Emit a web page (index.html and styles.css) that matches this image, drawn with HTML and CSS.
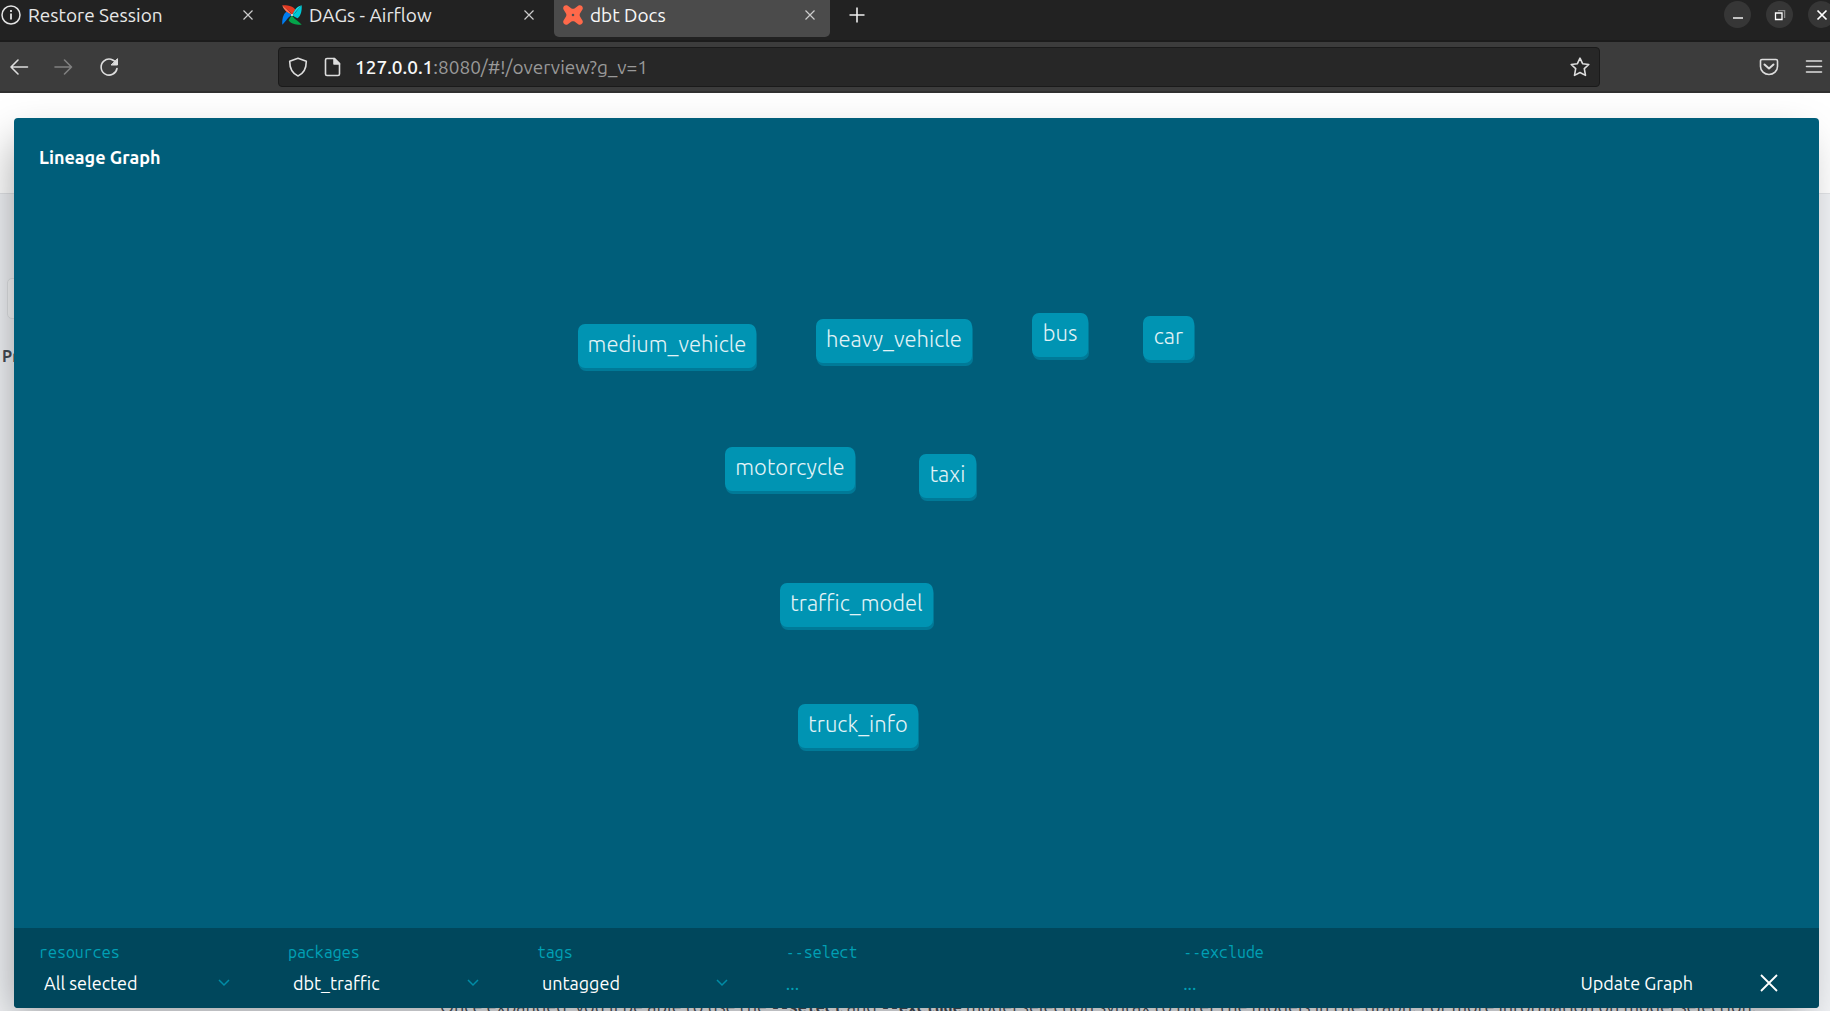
FILE: index.html
```html
<!DOCTYPE html>
<html lang="en">
<head>
<meta charset="utf-8">
<title>dbt Docs</title>
<link rel="stylesheet" href="styles.css">
</head>
<body>
<header class="browser">
  <div class="tabstrip">
    <div class="tab tab-first">
      <svg class="favicon" viewBox="0 0 20 20" fill="none" stroke="#e4e4e4" stroke-width="1.5"><circle cx="10" cy="10" r="9"/><path d="M10 8.500v6M10 5v2" stroke-width="1.800"/></svg>
      <span class="tab-title">Restore Session</span>
      <button class="tab-close" aria-label="Close tab"><svg viewBox="0 0 10 10"><path d="M0.500 0.500l9 9M9.500 0.500l-9 9"/></svg></button>
    </div>
    <div class="tab">
      <svg class="favicon" viewBox="0 0 20 20"><path d="M10 10C8.500 6 4 4.500 .3 .3 5 0 11 .8 13.300 4.500 12.500 6.500 11 8.500 10 10z" fill="#e43921"/><path d="M10 10C14 8.500 15.500 4 19.700 .3 20 5 19.200 11 15.500 13.300 13.500 12.500 11.500 11 10 10z" fill="#00c7d4"/><path d="M10 10C11.500 14 16 15.500 19.700 19.700 15 20 9 19.200 6.700 15.500 7.500 13.500 9 11.500 10 10z" fill="#04a54a"/><path d="M10 10C6 11.500 4.500 16 .3 19.700 0 15 .8 9 4.500 6.700 6.500 7.500 8.500 9 10 10z" fill="#017cee"/><path d="M13.300 4.500C15 2.500 17 1 19.700 .3 15.500 4 14 7.500 10 10z" fill="#11e1ee"/><path d="M4.500 6.700C2.500 5 1 3 .3 .3 4 4 7.500 6 10 10z" fill="#ff7557"/><circle cx="10" cy="10" r="1" fill="#eee"/></svg>
      <span class="tab-title">DAGs - Airflow</span>
      <button class="tab-close" aria-label="Close tab"><svg viewBox="0 0 10 10"><path d="M0.500 0.500l9 9M9.500 0.500l-9 9"/></svg></button>
    </div>
    <div class="tab tab-active">
      <svg class="favicon" viewBox="0 0 20 20"><path fill="#ff694a" fill-rule="evenodd" d="M4.500 .6 8.500 3.400C9.500 4 10.500 4 11.500 3.400L15.500 .6C18 -.6 20.600 1.800 19.600 4.300L17 8.500C16.500 9.500 16.500 10.500 17 11.500L19.600 15.700C20.600 18.200 18 20.600 15.500 19.400L11.500 16.600C10.500 16 9.500 16 8.500 16.600L4.500 19.400C2 20.600 -.6 18.200 .4 15.700L3 11.500C3.500 10.500 3.500 9.500 3 8.500L.4 4.300C-.6 1.800 2 -.6 4.500 .6zM8.700 10a1.300 1.300 0 1 0 2.600 0 1.300 1.300 0 1 0-2.600 0z"/></svg>
      <span class="tab-title">dbt Docs</span>
      <button class="tab-close" aria-label="Close tab"><svg viewBox="0 0 10 10"><path d="M0.500 0.500l9 9M9.500 0.500l-9 9"/></svg></button>
    </div>
    <button class="new-tab" aria-label="New tab"><svg viewBox="0 0 16 16" fill="none" stroke="#eee" stroke-width="1.600"><path d="M8 .5v15M.5 8h15"/></svg></button>
    <div class="window-buttons">
      <button class="win" aria-label="Minimize"><svg viewBox="0 0 12 12" fill="none" stroke="#fff" stroke-width="1.400"><path d="M1 9h10"/></svg></button>
      <button class="win" aria-label="Restore"><svg viewBox="0 0 12 12" fill="none" stroke="#fff" stroke-width="1.300"><path d="M1.500 4h6.500v6.500h-6.500z"/><path d="M4 1.600h6.600V9" stroke="#8a8a8a"/></svg></button>
      <button class="win" aria-label="Close window"><svg viewBox="0 0 12 12" fill="none" stroke="#fff" stroke-width="1.700"><path d="M1.500 1.500l9 9M10.500 1.500l-9 9"/></svg></button>
    </div>
  </div>
  <div class="toolbar">
    <nav class="nav">
      <button aria-label="Back"><svg viewBox="0 0 20 20" class="line"><path d="M18.500 10H2M9 3L2 10l7 7"/></svg></button>
      <button aria-label="Forward"><svg viewBox="0 0 20 20" class="line dim"><path d="M1 10h16.500M10.500 3l7 7-7 7"/></svg></button>
      <button aria-label="Reload"><svg viewBox="0 0 20 20" class="line"><path d="M17.500 7A8 8 0 1 0 18 11.500"/><path d="M18.500 2v6h-6z" fill="#ddd" stroke-width="1"/></svg></button>
    </nav>
    <div class="urlbar">
      <svg viewBox="0 0 20 20" class="line"><path d="M10 1.200 18.300 4.300C18.300 11 16 16.500 10 18.900 4 16.500 1.700 11 1.700 4.300z"/></svg>
      <svg viewBox="0 0 20 20" class="line page-icon"><path d="M4 1.500h7.500l5 5v10.500a1.500 1.500 0 0 1-1.500 1.500h-11A1.500 1.500 0 0 1 2.500 17V3a1.500 1.500 0 0 1 1.500-1.500z"/><path d="M11 1.500v5.500h5.500z" fill="#ddd"/></svg>
      <a class="url" href="#!/overview?g_v=1"><b>127.0.0.1</b>:8080/#!/overview?g_v=1</a>
      <button aria-label="Bookmark"><svg viewBox="0 0 20 20" class="line"><path d="M10 1.200l2.600 5.500 6.200.8-4.500 4.200 1.200 6.700L10 15.500l-5.500 2.900 1.200-6.700L1.200 7.500l6.200-.8z"/></svg></button>
    </div>
    <div class="tools">
      <button aria-label="Pocket"><svg viewBox="0 0 20 20" class="line"><path d="M3 2.500h14a1.500 1.500 0 0 1 1.500 1.500v5.500a8.500 8 0 0 1-17 0V4A1.500 1.500 0 0 1 3 2.500z"/><path d="M5.500 7.500l4.500 4 4.500-4" stroke-width="2"/></svg></button>
      <button aria-label="Menu"><svg viewBox="0 0 20 20" class="line"><path d="M2.500 4h15M2.500 9.500h15M2.500 15h15"/></svg></button>
    </div>
  </div>
</header>
<main class="viewport">
  <div class="docs">
    <div class="docs-header"></div>
    <div class="docs-body">
      <aside class="sidebar">
        <div class="toggle"></div>
        <strong>Project</strong>
      </aside>
      <p class="docs-text">Once expanded, you'll be able to use the <code>--select</code> and <code>--exclude</code> model selection syntax to filter the models in the graph. For more information on model selection.</p>
    </div>
  </div>
  <section class="lineage">
    <h1>Lineage Graph</h1>
    <div class="graph">
      <button class="node n-medium">medium_vehicle</button>
      <button class="node n-heavy">heavy_vehicle</button>
      <button class="node n-bus">bus</button>
      <button class="node n-car">car</button>
      <button class="node n-motorcycle">motorcycle</button>
      <button class="node n-taxi">taxi</button>
      <button class="node n-traffic">traffic_model</button>
      <button class="node n-truck">truck_info</button>
    </div>
    <form class="filters">
      <div class="field">
        <label for="resources">resources</label>
        <div class="select"><select id="resources"><option>All selected</option></select><svg viewBox="0 0 12 8"><path d="M1 1l5 5 5-5"/></svg></div>
      </div>
      <div class="field">
        <label for="packages">packages</label>
        <div class="select"><select id="packages"><option>dbt_traffic</option></select><svg viewBox="0 0 12 8"><path d="M1 1l5 5 5-5"/></svg></div>
      </div>
      <div class="field">
        <label for="tags">tags</label>
        <div class="select"><select id="tags"><option>untagged</option></select><svg viewBox="0 0 12 8"><path d="M1 1l5 5 5-5"/></svg></div>
      </div>
      <div class="field wide">
        <label for="select">--select</label>
        <input id="select" type="text" placeholder="...">
      </div>
      <div class="field wide">
        <label for="exclude">--exclude</label>
        <input id="exclude" type="text" placeholder="...">
      </div>
      <div class="actions">
        <button type="button" class="update">Update Graph</button>
        <button type="button" class="dismiss" aria-label="Close"><svg viewBox="0 0 18 18" fill="none" stroke="#fff" stroke-width="1.800"><path d="M1 1l16 16M17 1L1 17"/></svg></button>
      </div>
    </form>
  </section>
</main>
</body>
</html>
```
FILE: styles.css
```css
* { box-sizing: border-box; }
body {
  margin: 0;
  height: 100vh;
  display: flex;
  flex-direction: column;
  overflow: hidden;
  font-family: Ubuntu, "Noto Sans", sans-serif;
  font-size: 18px;
  background: #fff;
}
button, input, select {
  margin: 0;
  padding: 0;
  border: 0;
  background: none;
  color: inherit;
  font: inherit;
}
svg { display: block; flex: none; }
.line { width: 20px; height: 20px; fill: none; stroke: #ddd; stroke-width: 1.6; stroke-linejoin: round; stroke-linecap: round; }
.dim { stroke: #808080; }

/* Browser chrome */
.browser { flex: none; color: #e8e8e8; font-size: 19px; }
.tabstrip {
  display: flex;
  gap: 5px;
  height: 42px;
  background: #222;
  border-bottom: 2px solid #1c1c1c;
}
.tab {
  display: flex;
  align-items: center;
  width: 276px;
  height: 37px;
  padding: 0 15px 8px 9px;
}
.tab-first { width: 268px; padding-left: 1px; }
.tab-active { background: #4b4b4b; border-radius: 0 0 5px 5px; color: #f8f8f8; }
.favicon { width: 20px; height: 20px; }
.tab-title { flex: 1; margin-left: 7px; line-height: 24px; white-space: nowrap; }
.tab-close svg { width: 10px; height: 10px; stroke: #ccc; stroke-width: 1.2; }
.new-tab { width: 44px; height: 29px; display: flex; align-items: center; justify-content: center; }
.new-tab svg { width: 16px; height: 16px; }
.window-buttons { display: flex; gap: 15px; margin: 1px -5px 0 auto; }
.win {
  display: flex;
  align-items: center;
  justify-content: center;
  width: 27px;
  height: 27px;
  border-radius: 50%;
  background: #363636;
}
.win svg { width: 12px; height: 12px; }
.toolbar {
  display: flex;
  align-items: center;
  height: 51px;
  background: #3c3c3c;
  border-bottom: 2px solid #303030;
}
.nav { display: flex; gap: 25px; width: 278px; padding-left: 9px; }
.urlbar {
  flex: 1;
  display: flex;
  align-items: center;
  height: 40px;
  padding: 0 9px;
  background: #272727;
  border: 1px solid #1a1a1a;
  border-radius: 4px;
}
.page-icon { margin: 0 12px 0 15px; }
.url { flex: 1; color: #999; text-decoration: none; }
.url b { color: #f8f8f8; font-weight: 500; }
.tools { display: flex; justify-content: flex-end; gap: 25px; width: 230px; padding-right: 6px; }

/* Documentation page behind the graph */
.viewport { position: relative; flex: 1; min-height: 0; overflow: hidden; }
.docs { display: flex; flex-direction: column; height: 100%; }
.docs-header { height: 101px; border-bottom: 1px solid #e2e4e7; background: #fff; }
.docs-body { flex: 1; display: flex; justify-content: space-between; background: #f0f2f5; color: #444b54; min-height: 0; }
.sidebar { width: 300px; padding: 84px 0 0 2px; font-size: 16px; }
.toggle { height: 41px; margin: 0 0 28px 5px; border: 1px solid #e0e2e5; border-radius: 5px; background: #f6f7f8; }
.docs-text { align-self: flex-end; flex: 1; height: 17px; margin: 0 0 0 140px; line-height: 24px; white-space: nowrap; }
.docs-text code { font-family: "Ubuntu Mono", "DejaVu Sans Mono", monospace; font-size: 16px; font-weight: 700; }

/* Lineage overlay */
.lineage {
  position: absolute;
  inset: 25px 11px 3px 14px;
  display: flex;
  flex-direction: column;
  border-radius: 4px;
  background: #005e7a;
  box-shadow: -8px 16px 40px -7px rgba(0, 0, 0, 0.34);
  color: #fff;
}
.lineage h1 { margin: 0; padding: 27px 25px 0; height: 60px; font-size: 18px; line-height: 24px; }
.graph { position: relative; flex: 1; }
.node {
  position: absolute;
  height: 44px;
  padding-bottom: 5px;
  border-radius: 7px;
  background: #0094b3;
  box-shadow: 1px 3px 0 #007a98;
  color: #e2f3f7;
  font-family: Ubuntu, "Open Sans", sans-serif;
  font-size: 22px;
  font-weight: 300;
  white-space: nowrap;
}
.n-medium { left: 564px; top: 146px; width: 178px; }
.n-heavy { left: 802px; top: 141px; width: 156px; }
.n-bus { left: 1018px; top: 135px; width: 56px; }
.n-car { left: 1129px; top: 138px; width: 51px; }
.n-motorcycle { left: 711px; top: 269px; width: 130px; }
.n-taxi { left: 905px; top: 276px; width: 57px; }
.n-traffic { left: 766px; top: 405px; width: 153px; }
.n-truck { left: 784px; top: 526px; width: 120px; }
.filters {
  display: flex;
  height: 80px;
  padding: 14px 41px 0 25px;
  border-radius: 0 0 4px 4px;
  background: #00475c;
}
.field { width: 250px; }
.field.wide { width: 399px; }
.field label {
  display: block;
  color: #00a0b5;
  font-family: "Ubuntu Mono", "DejaVu Sans Mono", monospace;
  font-size: 16px;
  line-height: 20px;
}
.select { display: flex; align-items: center; width: 191px; height: 24px; margin-top: 9px; padding-left: 5px; }
.select select { flex: 1; appearance: none; outline: 0; }
.select svg { width: 12px; height: 8px; fill: none; stroke: #008ca6; stroke-width: 1.5; }
.field input { display: block; width: 90%; height: 24px; margin-top: 9px; color: #fff; outline: 0; }
.field input::placeholder { color: #00a0b5; opacity: 1; }
.actions { display: flex; flex: none; align-items: center; gap: 67px; height: 24px; margin: 29px 0 0 auto; }
.update { white-space: nowrap; }
.dismiss svg { width: 18px; height: 18px; }
```
